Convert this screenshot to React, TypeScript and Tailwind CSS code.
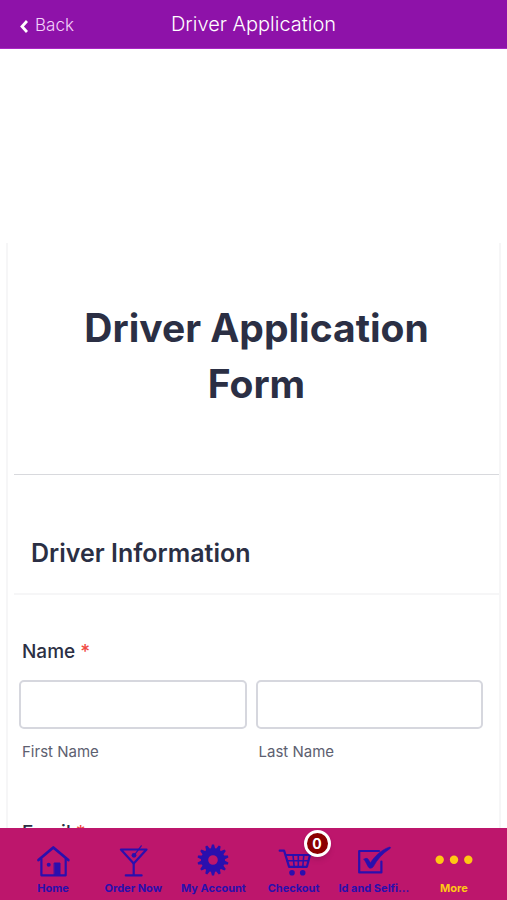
import React from 'react';

interface NavItem {
  label: string;
  icon: React.ReactNode;
  badge?: number;
  active?: boolean;
}

const GEAR_TEETH = 14;

// each tooth is a blunt wedge: two points at the tip, two in the valley
const gearPoints = Array.from({ length: GEAR_TEETH }, (_, i) => {
  const step = (Math.PI * 2) / GEAR_TEETH;
  const point = (radius: number, angle: number) =>
    `${(18 + radius * Math.cos(angle)).toFixed(2)},${(15 + radius * Math.sin(angle)).toFixed(2)}`;
  const center = i * step - Math.PI / 2;
  return [
    point(15.6, center - step * 0.15),
    point(15.6, center + step * 0.15),
    point(12, center + step * 0.38),
    point(12, center + step * 0.62)
  ].join(' ');
}).join(' ');

const Icon: React.FC<{ children: React.ReactNode }> = ({ children }) => (
  <svg
    className="h-8 w-9 overflow-visible"
    viewBox="0 0 36 32"
    fill="none"
    stroke="currentColor"
    strokeWidth="2.2"
    strokeLinecap="round"
    strokeLinejoin="round"
    aria-hidden="true"
  >
    {children}
  </svg>
);

const HomeIcon = () => (
  <Icon>
    <path d="M3.5 15 18.3 2.5 33.3 15" strokeWidth="2.8" />
    <path d="M6.4 14v16.3h24.3V14" />
    <path d="M19.5 18h5.5v12h-5.500z" fill="currentColor" strokeWidth="1" />
    <circle cx="13.7" cy="19.7" r="2" fill="currentColor" stroke="none" />
  </Icon>
);

const DrinkIcon = () => (
  <Icon>
    <path d="M5.9 4.5h25.6L18.7 18.6z" />
    <path d="M18.7 18.6v11.8M10.8 30.4h15.8" />
    <path d="M19 10.5 26.3.8" strokeWidth="1.2" />
    <circle cx="19" cy="10.3" r="2.4" fill="currentColor" stroke="none" />
  </Icon>
);

const GearIcon = () => (
  <Icon>
    <path
      d={`M${gearPoints}z M13.2 15a4.8 4.8 0 1 0 9.6 0 4.8 4.8 0 1 0-9.6 0z`}
      fill="currentColor"
      fillRule="evenodd"
      stroke="none"
    />
  </Icon>
);

const CartIcon = () => (
  <Icon>
    <path d="M3.7 5.7h4.4l5 16.1h17.8L34 10H9.6" />
    <path d="M11.2 15.8h21M17 10l1.2 11.8M22.3 10v11.8M27.8 10l-1 11.8" strokeWidth="1.6" />
    <circle cx="16" cy="27.8" r="2.8" fill="currentColor" stroke="none" />
    <circle cx="26.7" cy="27.8" r="2.8" fill="currentColor" stroke="none" />
  </Icon>
);

const CheckIcon = () => (
  <Icon>
    <path d="M23 6H3.2v21.4h22.2V16.5" />
    <path
      d="M8 14.2c1.5-1.3 3.6-1.1 4.5.5l1.9 3.2C19 10.8 25 5.2 33 2.2c1.6-.5 2.2.6.9 1.5C26.5 8.3 21.2 14.5 17.2 21.8c-.9 1.7-3.9 1.9-4.9.1C11 19.5 9.8 17 8 14.2z"
      fill="currentColor"
      strokeWidth=".6"
    />
  </Icon>
);

const MoreIcon = () => (
  <Icon>
    <g fill="currentColor" stroke="none">
      <circle cx="3.7" cy="14.7" r="4.2" />
      <circle cx="18" cy="14.7" r="4.2" />
      <circle cx="32.3" cy="14.7" r="4.2" />
    </g>
  </Icon>
);

const navItems: NavItem[] = [
  { label: 'Home', icon: <HomeIcon /> },
  { label: 'Order Now', icon: <DrinkIcon /> },
  { label: 'My Account', icon: <GearIcon /> },
  { label: 'Checkout', icon: <CartIcon />, badge: 0 },
  { label: 'Id and Selfi...', icon: <CheckIcon /> },
  { label: 'More', icon: <MoreIcon />, active: true }
];

const Header: React.FC = () => (
  <header className="grid h-[49px] shrink-0 grid-cols-[1fr_auto_1fr] items-center border-b border-[#a928c4] bg-[#8e12a9] px-5 text-white">
    <button type="button" className="flex items-center gap-[7px] justify-self-start pt-1 text-[17px] font-light text-[#f3d3fa]">
      <svg className="h-[13px] w-2" viewBox="0 0 8 13" fill="none" stroke="#ffffff" strokeWidth="2.8" aria-hidden="true">
        <path d="M7 1 2 6.5 7 12" />
      </svg>
      Back
    </button>
    <h1 className="pb-px text-xl font-light">Driver Application</h1>
  </header>
);

interface TextFieldProps {
  id: string;
  label: string;
}

const TextField: React.FC<TextFieldProps> = ({ id, label }) => (
  <div className="flex min-w-0 flex-1 flex-col gap-3">
    <input
      id={id}
      type="text"
      className="h-[49px] w-full rounded-[5px] border-2 border-[#d6d7de] bg-white px-3 text-base outline-none"
    />
    <label htmlFor={id} className="px-[3px] text-[15px] leading-[22px] text-[#5d6070]">
      {label}
    </label>
  </div>
);

const Required = () => <span className="text-[#f04a43]">*</span>;

const DriverForm: React.FC = () => (
  <form className="mx-[6px] mt-[194px] border-x-2 border-[#f6f6f7] pl-[6px] text-[#2b2f44]">
    <div className="border-b border-[#d8d9dd] px-8 pt-[57px] pb-[62px]">
      <h2 className="text-center text-[39px] leading-[56px] font-bold">Driver Application Form</h2>
    </div>
    <div className="border-b-2 border-[#f6f6f7] px-[17px] pt-[62px] pb-[24px]">
      <h3 className="text-[25px] leading-8 font-semibold">Driver Information</h3>
    </div>
    <fieldset className="mt-[43px] pr-4 pl-[5px]">
      <legend className="px-[3px] text-[19px] leading-7 font-medium">
        Name <Required />
      </legend>
      <div className="mt-[14px] flex gap-[9px]">
        <TextField id="first-name" label="First Name" />
        <TextField id="last-name" label="Last Name" />
      </div>
    </fieldset>
    <div className="flex flex-col gap-[14px] pt-14 pr-4 pl-[5px]">
      <label htmlFor="email" className="px-[3px] text-[19px] leading-7 font-medium">
        Email <Required />
      </label>
      <input id="email" type="email" className="h-[49px] w-full rounded-[5px] border-2 border-[#d6d7de]" />
    </div>
  </form>
);

const TabBar: React.FC = () => (
  <nav className="flex h-[72px] shrink-0 bg-[#bd166c] px-[13px]">
    {navItems.map(({ label, icon, badge, active }) => (
      <button
        key={label}
        type="button"
        className={`relative flex min-w-0 flex-1 flex-col items-center gap-1 pt-[17px] text-[11px] leading-[14px] font-bold whitespace-nowrap ${
          active ? 'text-[#ffc814]' : 'text-[#2a0fae]'
        }`}
      >
        {icon}
        <span>{label}</span>
        {badge !== undefined && (
          <span className="absolute top-[2px] left-1/2 ml-[10px] flex size-[27px] items-center justify-center rounded-full border-[3px] border-white bg-[#8b0000] text-sm font-bold text-white shadow-md">
            {badge}
          </span>
        )}
      </button>
    ))}
  </nav>
);

export default function App() {
  return (
    <div className="flex h-screen flex-col bg-white font-[Inter,sans-serif]">
      <Header />
      <main className="min-h-0 flex-1 overflow-hidden">
        <DriverForm />
      </main>
      <TabBar />
    </div>
  );
}
